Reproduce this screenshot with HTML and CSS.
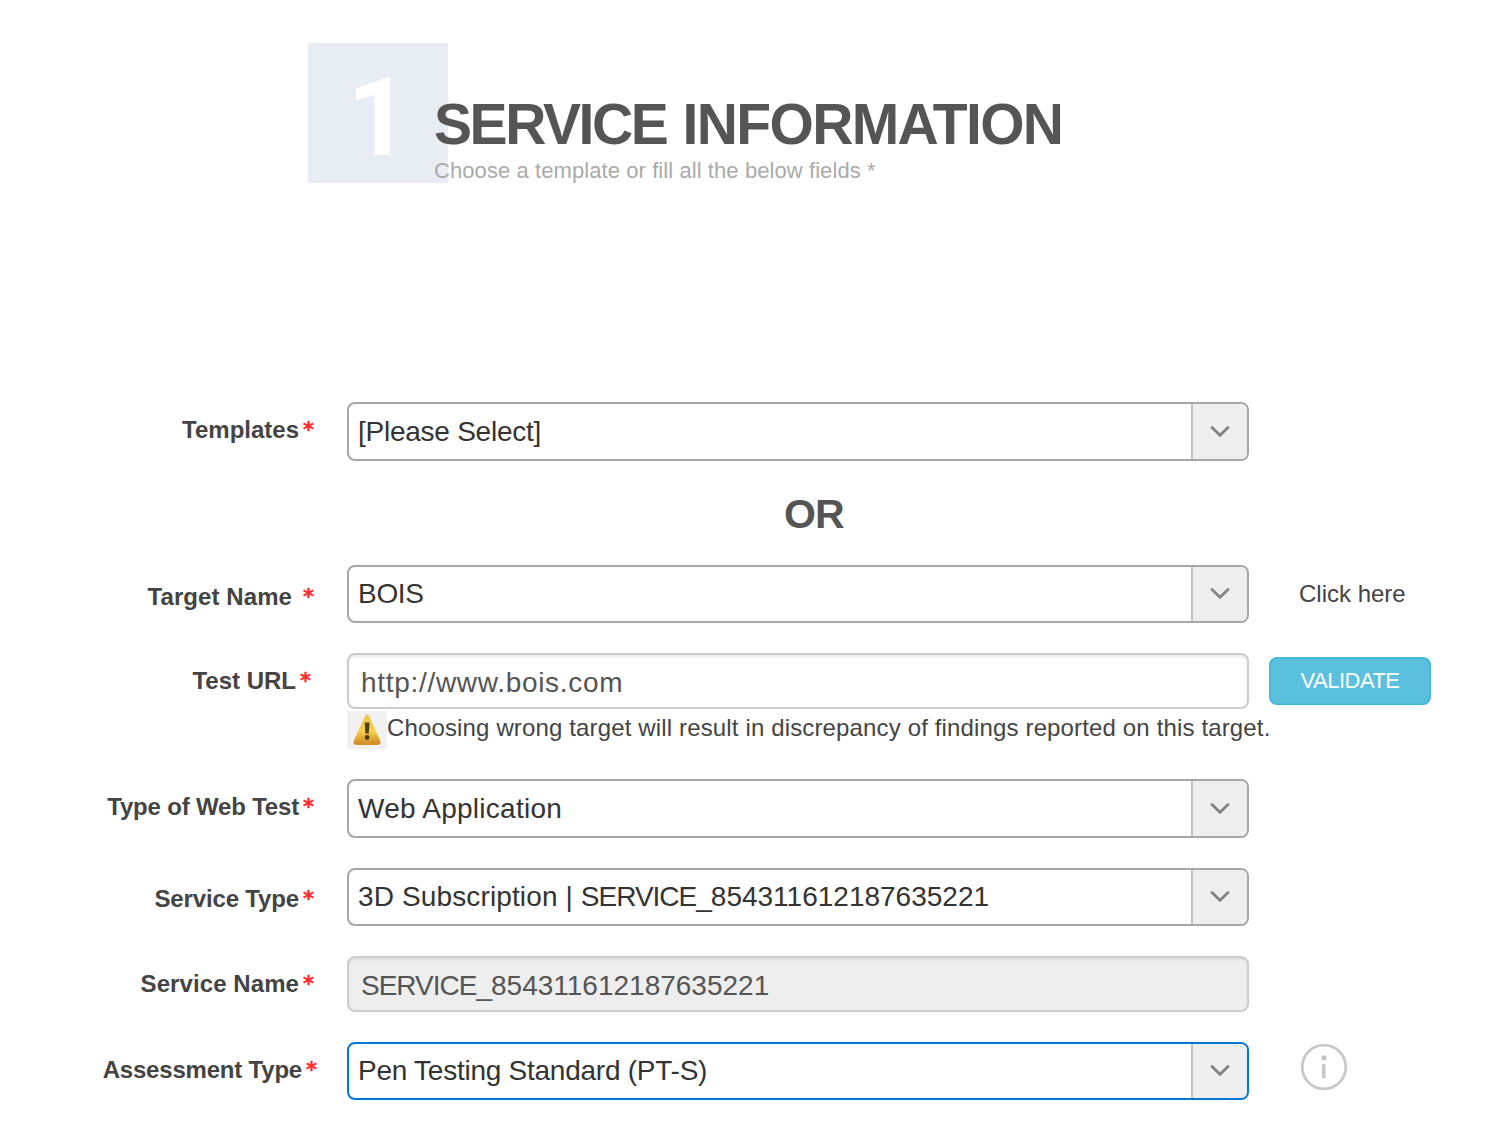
FILE: index.html
```html
<!DOCTYPE html>
<html lang="en">
<head>
  <meta charset="UTF-8">
  <meta name="viewport" content="width=device-width, initial-scale=1.0">
  <title>Service Information</title>
  <link rel="stylesheet" href="styles.css">
</head>
<body>
  <svg class="symbols" width="0" height="0">
    <symbol id="chevron" viewBox="0 0 20 12">
      <path d="M2 1.6 L10 9.2 L18 1.6" fill="none" stroke="#828282" stroke-width="2.8" stroke-linecap="round"/>
    </symbol>
  </svg>

  <header class="step">
    <div class="step-number">1</div>
    <div class="step-text">
      <h1><span>SERVICE</span> INFORMATION</h1>
      <p>Choose a template or fill all the below fields *</p>
    </div>
  </header>

  <main class="form">
    <div class="row tall">
      <div class="label"><span>Templates</span><i>*</i></div>
      <div class="select"><span class="value v-please">[Please Select]</span><span class="arrow"><svg><use href="#chevron"/></svg></span></div>
    </div>

    <h2 class="or">OR</h2>

    <div class="row">
      <div class="label lower spaced"><span class="t-target">Target Name</span><i>*</i></div>
      <div class="select"><span class="value v-bois">BOIS</span><span class="arrow"><svg><use href="#chevron"/></svg></span></div>
      <a class="click-here">Click here</a>
    </div>

    <div class="row url-row">
      <div class="label shifted"><span>Test URL</span><i>*</i></div>
      <div class="input"><span class="value v-url">http://www.bois.com</span></div>
      <button class="validate" type="button">VALIDATE</button>
    </div>
    <div class="warning">
      <svg class="warning-icon" viewBox="0 0 40 38">
        <defs>
          <linearGradient id="amber" x1="0" y1="0" x2="0" y2="1">
            <stop offset="0" stop-color="#ecc848"/>
            <stop offset="0.55" stop-color="#f6d04c"/>
            <stop offset="1" stop-color="#d3902b"/>
          </linearGradient>
        </defs>
        <rect width="40" height="38" fill="#f1f1f1"/>
        <path d="M20 5.5 L31.5 30.5 Q32 32 30.5 32 H9.5 Q8 32 8.5 30.5 Z" fill="url(#amber)" stroke="url(#amber)" stroke-width="4" stroke-linejoin="round"/>
        <path d="M17.7 11.5 h4.8 l-.7 11 h-3.4 Z" fill="#4b3d14"/>
        <circle cx="20.1" cy="26.5" r="2.4" fill="#4b3d14"/>
      </svg>
      <span class="warning-text">Choosing wrong target will result in discrepancy of findings reported on this target.</span>
    </div>

    <div class="row tall">
      <div class="label"><span class="t-web">Type of Web Test</span><i>*</i></div>
      <div class="select"><span class="value v-web">Web Application</span><span class="arrow"><svg><use href="#chevron"/></svg></span></div>
    </div>

    <div class="row">
      <div class="label low"><span class="t-type">Service Type</span><i>*</i></div>
      <div class="select"><span class="value"><span class="plan">3D Subscription | </span><span class="prefix">SERVICE_</span>854311612187635221</span><span class="arrow"><svg><use href="#chevron"/></svg></span></div>
    </div>

    <div class="row name-row">
      <div class="label"><span class="t-name">Service Name</span><i>*</i></div>
      <div class="input disabled"><span class="value"><span class="prefix">SERVICE_</span>854311612187635221</span></div>
    </div>

    <div class="row">
      <div class="label out"><span class="t-assess">Assessment Type</span><i>*</i></div>
      <div class="select focused"><span class="value v-pen">Pen Testing Standard (PT-S)</span><span class="arrow"><svg><use href="#chevron"/></svg></span></div>
      <svg class="info" viewBox="0 0 50 50">
        <circle cx="25" cy="25" r="21.8" fill="none" stroke="#c8c8c8" stroke-width="2.8"/>
        <circle cx="25" cy="15.8" r="2.6" fill="#c4c4c4"/>
        <path d="M24.8 23.5 V35" stroke="#c8c8c8" stroke-width="3.6" stroke-linecap="round"/>
      </svg>
    </div>
  </main>
</body>
</html>
```

FILE: styles.css
```css
* {
  box-sizing: border-box;
}
body {
  margin: 0;
  padding-top: 43px;
  height: 1124px;
  overflow: hidden;
  background: #fff;
  color: #444;
  font-family: "Liberation Sans", Arial, sans-serif;
  font-size: 24px;
}
.symbols {
  display: block;
}
h1, h2, p {
  margin: 0;
}

/* step heading */
.step {
  display: flex;
  height: 359px;
  padding-left: 308px;
}
.step-number {
  width: 140px;
  height: 140px;
  padding-left: 39px;
  background: #e8edf4;
  color: #fff;
  font-family: Roboto, sans-serif;
  font-size: 110px;
  font-weight: bold;
  line-height: 149px;
}
.step-text {
  margin-left: -14px;
  padding-top: 50px;
  white-space: nowrap;
}
h1 {
  color: #555;
  font-size: 57px;
  letter-spacing: -1.65px;
  line-height: 62px;
  word-spacing: 2px;
}
h1 span {
  letter-spacing: -2.4px;
}
.step-text p {
  padding-top: 1px;
  color: #aaa;
  font-size: 22px;
  letter-spacing: 0.08px;
  line-height: 30px;
}

/* form rows */
.row {
  display: grid;
  grid-template-columns: 347px 902px auto;
  justify-content: start;
  align-items: start;
  height: 58px;
  margin-bottom: 30px;
}
.row.tall {
  height: 59px;
}
.label {
  height: 43px;
  padding: 13px 33px 0 0;
  font-weight: bold;
  line-height: 30px;
  text-align: right;
  white-space: nowrap;
}
.label i {
  display: inline-block;
  width: 10px;
  margin-left: 5px;
  color: #ff2d2d;
  font-family: "DejaVu Sans", sans-serif;
  font-size: 21px;
  font-style: normal;
  line-height: 20px;
  text-indent: -1px;
  vertical-align: 1px;
  -webkit-text-stroke: 0.4px #ff2d2d;
}
.label.lower {
  padding-top: 17px;
}
.label.low {
  padding-top: 16px;
}
.label.spaced i {
  margin-left: 12px;
}
.label.shifted {
  padding-right: 36px;
}
.label.out {
  padding-right: 30px;
}
.select, .input {
  display: flex;
  align-items: center;
  height: 100%;
  border: 2px solid #a6a6a6;
  border-radius: 8px;
  overflow: hidden;
  color: #333;
  font-size: 28px;
  white-space: nowrap;
}
.value {
  flex: 1;
  padding-left: 9px;
}
.arrow {
  display: flex;
  align-items: center;
  justify-content: center;
  width: 56px;
  height: 100%;
  border-left: 2px solid #c2c2c2;
  background: #eee;
}
.arrow svg {
  width: 20px;
  height: 12px;
}
.focused {
  border-color: #0078d7;
}
.input {
  border-color: #ccc;
  box-shadow: inset 0 2px 2px rgba(0, 0, 0, 0.075);
  color: #555;
}
.input .value {
  padding: 4px 0 0 12px;
}
.disabled {
  background: #eee;
}
.or {
  height: 44px;
  margin: 0 0 30px 784px;
  color: #555;
  font-size: 41px;
  letter-spacing: -1px;
  line-height: 46px;
}
.click-here {
  padding: 14px 0 0 50px;
  line-height: 30px;
}
.url-row {
  height: 56px;
  margin-bottom: 2px;
}
.name-row {
  height: 56px;
}
.validate {
  width: 162px;
  height: 48px;
  margin: 4px 0 0 20px;
  padding: 0;
  border: 2px solid #46b8da;
  border-radius: 8px;
  background: #5bc0de;
  color: #fff;
  font-family: inherit;
  font-size: 22px;
  letter-spacing: -0.5px;
}
.warning {
  display: flex;
  height: 38px;
  margin: 0 0 30px 347px;
  line-height: 34px;
  white-space: nowrap;
}
.warning-icon {
  width: 40px;
  height: 38px;
}
.info {
  width: 50px;
  height: 50px;
  margin-left: 50px;
}

/* tracking */
.t-target { letter-spacing: 0.08px; }
.t-web { letter-spacing: -0.18px; }
.t-type { letter-spacing: -0.15px; }
.t-name { letter-spacing: 0.08px; }
.t-assess { letter-spacing: -0.2px; }
.v-please { letter-spacing: -0.25px; }
.v-bois { letter-spacing: -0.3px; }
.v-url { letter-spacing: 0.7px; }
.v-web { letter-spacing: 0.25px; }
.v-pen { letter-spacing: -0.25px; }
.plan { letter-spacing: 0.13px; }
.prefix { letter-spacing: -1px; }
.warning-text { letter-spacing: 0.145px; }
```
